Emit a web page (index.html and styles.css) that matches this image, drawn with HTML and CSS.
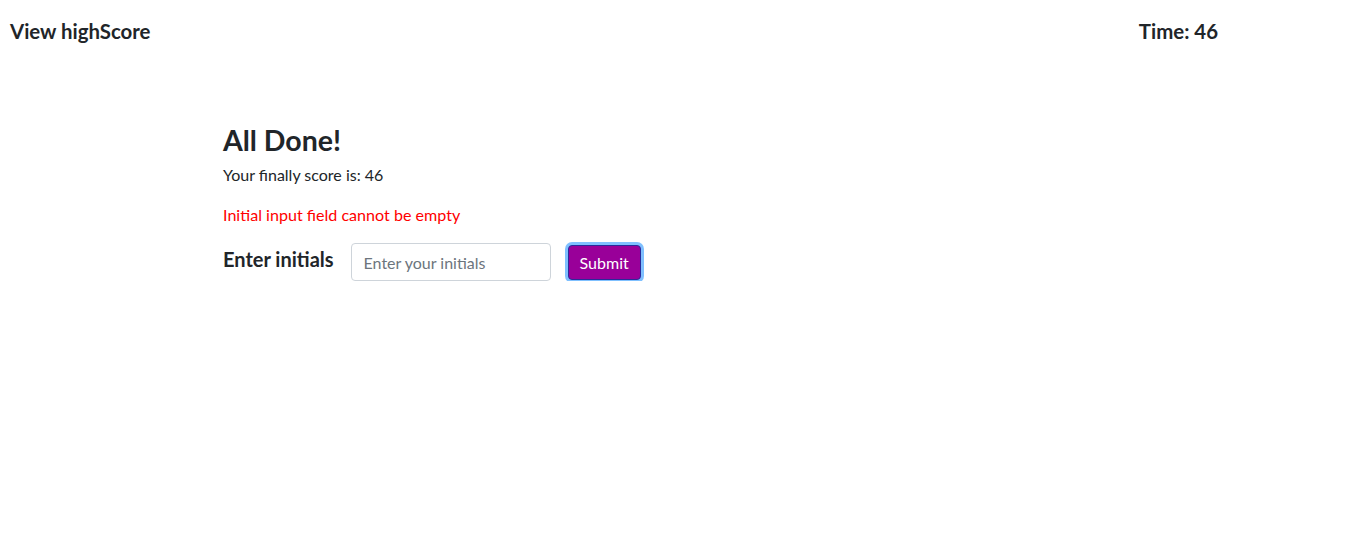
FILE: index.html
```html
<!DOCTYPE html>
<html lang="en">
<head>
<meta charset="utf-8">
<title>Quiz</title>
<link rel="stylesheet" href="styles.css">
</head>
<body>
<header class="topbar">
  <a class="highscore-link" href="#">View highScore</a>
  <div class="timer">Time: <span>46</span></div>
</header>
<main class="container">
  <h3 class="done-title">All Done!</h3>
  <p class="score-text">Your finally score is: 46</p>
  <p class="error-text">Initial input field cannot be empty</p>
  <form class="initials-form">
    <label class="initials-label" for="initials">Enter initials</label>
    <input class="initials-input" id="initials" type="text" placeholder="Enter your initials">
    <button class="submit-btn" type="button">Submit</button>
  </form>
</main>
</body>
</html>
```

FILE: styles.css
```css
* { box-sizing: border-box; }
html, body {
  margin: 0;
  padding: 0;
  background: #fff;
}
body {
  font-family: "Lato", "Open Sans", sans-serif;
  font-size: 16px;
  line-height: 1.5;
  color: #212529;
}
.topbar {
  display: flex;
  justify-content: space-between;
  align-items: center;
  padding: 19px 138px 0 10px;
}
.highscore-link,
.timer {
  font-size: 20.4px;
  font-weight: 700;
  line-height: 24px;
  color: #212529;
  text-decoration: none;
}
.container {
  padding: 0 0 0 223px;
  margin-top: 80px;
}
.done-title {
  margin: 0 0 6px;
  font-size: 28.5px;
  font-weight: 700;
  line-height: 1.2;
}
.score-text {
  margin: 0 0 16px;
}
.error-text {
  margin: 0 0 16px;
  color: #ff0000;
  font-size: 16.1px;
}
.initials-form {
  display: flex;
  align-items: center;
}
.initials-label {
  font-size: 20px;
  font-weight: 700;
  margin-right: 17px;
  margin-top: -6px;
}
.initials-input {
  width: 200px;
  height: 38px;
  padding: 6px 12px;
  font-family: inherit;
  font-size: 16px;
  color: #495057;
  border: 1px solid #ced4da;
  border-radius: 4px;
  outline: none;
}
.initials-input::placeholder {
  color: #6c757d;
}
.submit-btn {
  margin-left: 17px;
  height: 35px;
  padding: 0 11px;
  font-family: inherit;
  font-size: 16px;
  color: #fff;
  background: #990099;
  border: 1px solid #2a2a9a;
  border-radius: 4px;
  box-shadow: 0 0 0 3px #7fc0ff;
}
```
